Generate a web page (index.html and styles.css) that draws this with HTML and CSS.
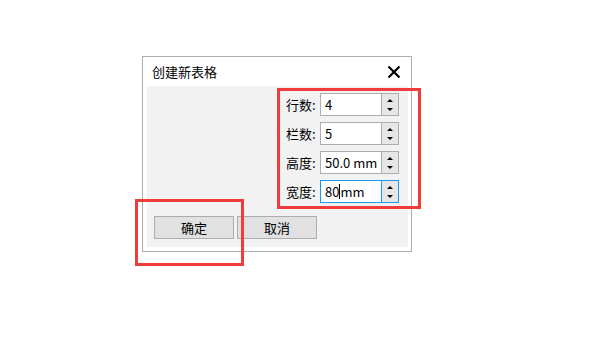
FILE: index.html
```html
<!DOCTYPE html>
<html lang="zh">
  <head>
    <meta charset="UTF-8" />
    <title>创建新表格</title>
    <link rel="stylesheet" href="styles.css">
  </head>
  <body>
    <div class="dialog">
      <div class="titlebar">
        <span class="title">创建新表格</span>
        <svg class="close" width="14" height="14" viewBox="0 0 14 14">
          <path d="M1.5 1.5 L12.5 12.5 M12.5 1.5 L1.5 12.5" stroke="#000" stroke-width="2.2" fill="none" />
        </svg>
      </div>

      <div class="panel">
        <div class="fields">
          <div class="row">
            <label>行数:</label>
            <div class="spin">
              <span class="value">4</span>
              <span class="arrows"><i class="up"></i><i class="down"></i></span>
            </div>
          </div>
          <div class="row">
            <label>栏数:</label>
            <div class="spin">
              <span class="value">5</span>
              <span class="arrows"><i class="up"></i><i class="down"></i></span>
            </div>
          </div>
          <div class="row">
            <label>高度:</label>
            <div class="spin">
              <span class="value">50.0 mm</span>
              <span class="arrows"><i class="up"></i><i class="down"></i></span>
            </div>
          </div>
          <div class="row">
            <label>宽度:</label>
            <div class="spin focused">
              <span class="value">80<span class="caret"></span>mm</span>
              <span class="arrows"><i class="up"></i><i class="down"></i></span>
            </div>
          </div>
        </div>

        <div class="buttons">
          <button type="button">确定</button>
          <button type="button">取消</button>
        </div>
      </div>
    </div>

    <!-- highlight boxes -->
    <div class="mark mark-fields"></div>
    <div class="mark mark-ok"></div>
  </body>
</html>
```

FILE: styles.css
```css
* {
  box-sizing: border-box;
}

body {
  margin: 0;
  background-color: #ffffff;
  font-family: "Noto Sans CJK SC", "Microsoft YaHei", sans-serif;
  font-size: 12px;
  color: #000;
}

.dialog {
  width: 270px;
  height: 196px;
  margin: 56px 0 0 142px;
  border: 1px solid #adadad;
  background-color: #ffffff;
  display: flex;
  flex-direction: column;
}

.titlebar {
  height: 29px;
  display: flex;
  align-items: center;
  justify-content: space-between;
  padding: 0 10px 0 9px;
}

.title {
  font-size: 13px;
  line-height: 16px;
}

.close {
  display: block;
}

.panel {
  height: 161px;
  margin: 0 3px 0 4px;
  background-color: #f2f2f2;
  display: flex;
  flex-direction: column;
  padding: 7px 9px 8px 7px;
}

.fields {
  display: flex;
  flex-direction: column;
  align-items: flex-end;
  gap: 6px;
}

.row {
  display: flex;
  align-items: center;
  height: 23px;
}

.row label {
  width: 34px;
  font-size: 13px;
  line-height: 16px;
}

.spin {
  width: 79px;
  height: 23px;
  border: 1px solid #adadad;
  background-color: #ffffff;
  display: flex;
}

.spin.focused {
  border-color: #1a9be8;
}

.value {
  flex: 1;
  padding-left: 4px;
  font-size: 13px;
  line-height: 21px;
  display: flex;
  align-items: center;
}

.caret {
  display: inline-block;
  width: 1px;
  height: 15px;
  background-color: #000;
}

.arrows {
  width: 17px;
  border-left: 1px solid #adadad;
  background-color: #e6e6e6;
  display: flex;
  flex-direction: column;
  align-items: center;
  justify-content: space-between;
  padding: 5px 0 4px;
}

.focused .arrows {
  border-left-color: #1a9be8;
}

.arrows i {
  width: 0;
  height: 0;
  border-left: 3px solid transparent;
  border-right: 3px solid transparent;
}

.arrows .up {
  border-bottom: 3px solid #000;
}

.arrows .down {
  border-top: 3px solid #000;
}

.buttons {
  margin-top: auto;
  display: flex;
  gap: 3px;
}

button {
  width: 80px;
  height: 23px;
  border: 1px solid #adadad;
  background-color: #e1e1e1;
  font-family: inherit;
  font-size: 13px;
  padding: 0;
}

.mark {
  position: absolute;
  border: 3px solid #f13c3c;
}

.mark-fields {
  left: 277px;
  top: 88px;
  width: 144px;
  height: 121px;
}

.mark-ok {
  left: 135px;
  top: 199px;
  width: 109px;
  height: 67px;
}
```
